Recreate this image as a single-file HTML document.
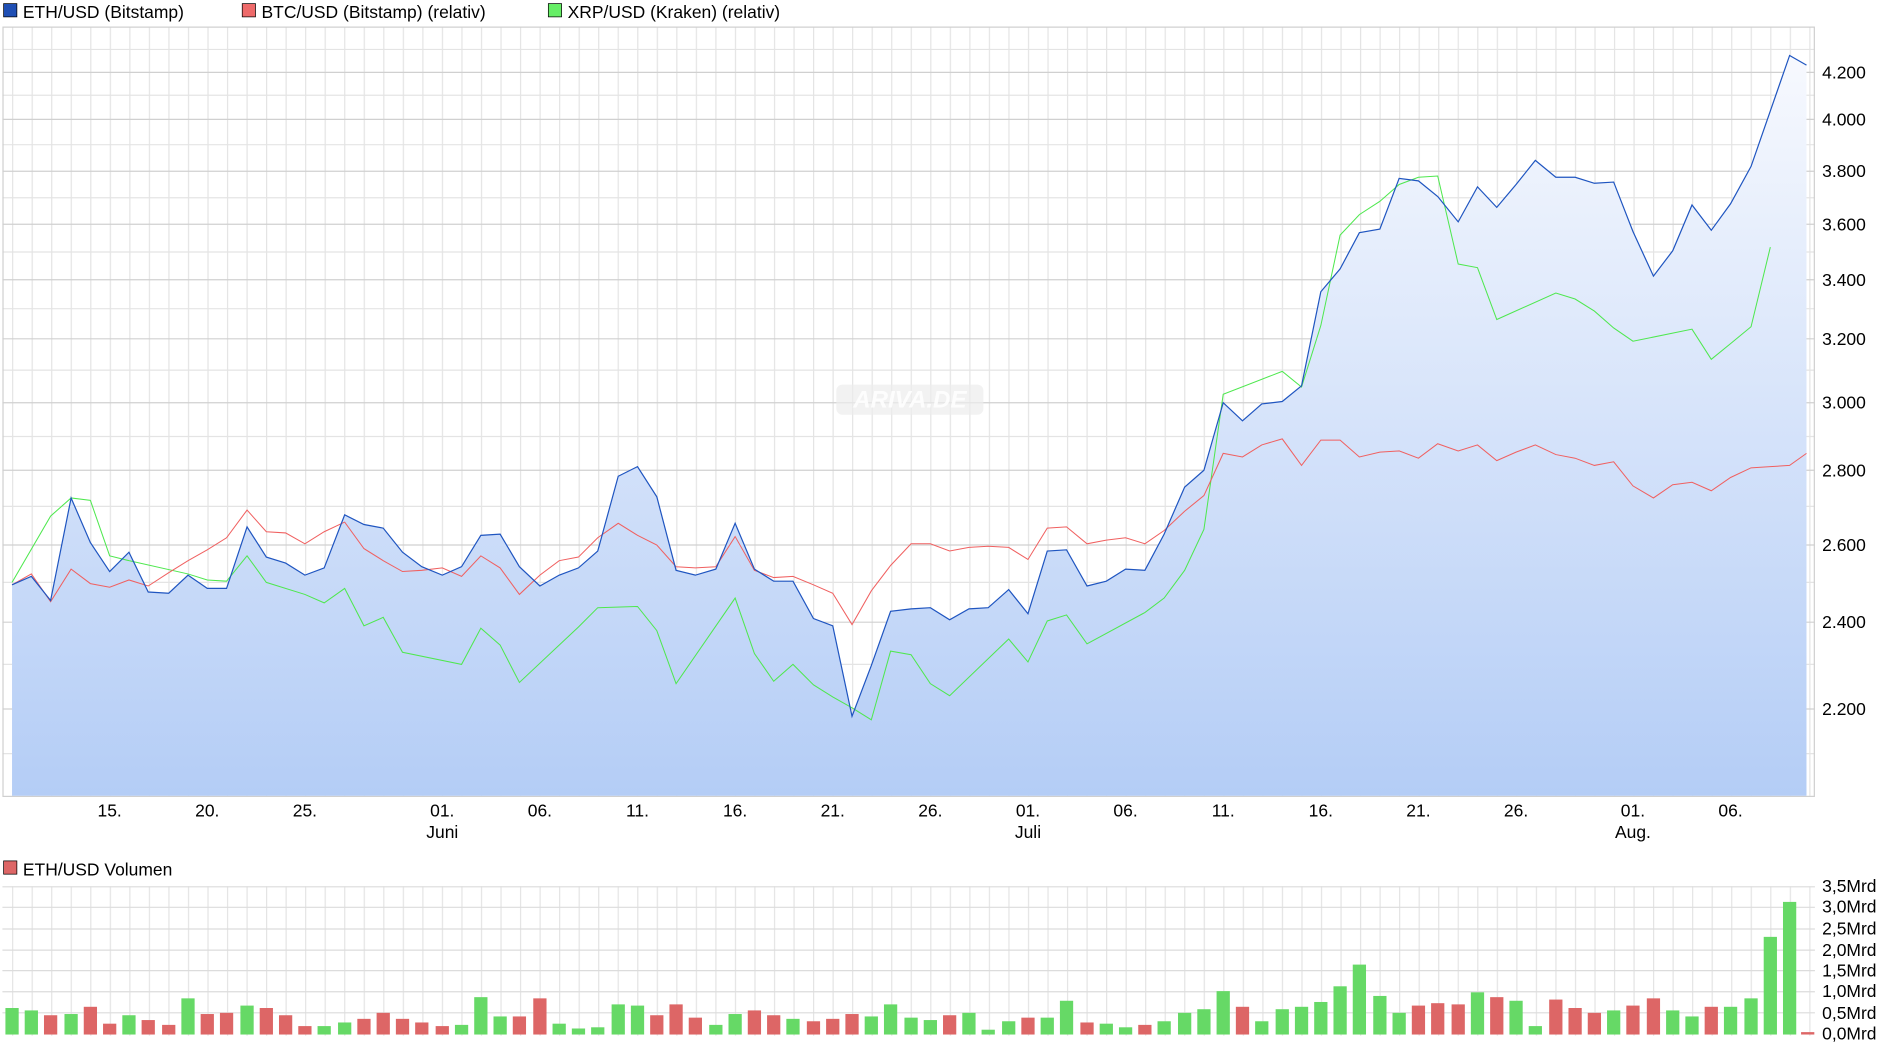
<!DOCTYPE html>
<html><head><meta charset="utf-8"><style>
html,body{margin:0;padding:0;background:#fff;overflow:hidden}
svg{display:block}
text{font-family:"Liberation Sans",Arial,sans-serif;fill:#000}
</style></head><body>
<svg width="1880" height="1049" viewBox="0 0 1560 870" preserveAspectRatio="none" xmlns="http://www.w3.org/2000/svg">
<defs>
<linearGradient id="fg" x1="0" y1="0" x2="0" y2="1"><stop offset="0" stop-color="#f7f9fe"/><stop offset="1" stop-color="#b4cdf6"/></linearGradient>
<pattern id="vg" x="10" y="0" width="16.21" height="10" patternUnits="userSpaceOnUse"><line x1="0.5" y1="0" x2="0.5" y2="10" stroke="#e4e4e4" stroke-width="1"/></pattern>
</defs>
<rect x="3" y="3" width="11" height="11" fill="#1f4fb4" stroke="#000" stroke-width="0.6"/>
<text x="19" y="15" font-size="14.5">ETH/USD (Bitstamp)</text>
<rect x="201" y="3" width="11" height="11" fill="#ee6a6a" stroke="#000" stroke-width="0.6"/>
<text x="217" y="15" font-size="14.5">BTC/USD (Bitstamp) (relativ)</text>
<rect x="455" y="3" width="11" height="11" fill="#66ee66" stroke="#000" stroke-width="0.6"/>
<text x="471" y="15" font-size="14.5">XRP/USD (Kraken) (relativ)</text>

<rect x="2" y="22" width="1504" height="638" fill="url(#vg)"/>
<g stroke="#e4e4e4" stroke-width="1">
<line x1="2" y1="41" x2="1506" y2="41"/><line x1="2" y1="79" x2="1506" y2="79"/><line x1="2" y1="120" x2="1506" y2="120"/><line x1="2" y1="164" x2="1506" y2="164"/><line x1="2" y1="209" x2="1506" y2="209"/><line x1="2" y1="256" x2="1506" y2="256"/><line x1="2" y1="307" x2="1506" y2="307"/><line x1="2" y1="362" x2="1506" y2="362"/><line x1="2" y1="420" x2="1506" y2="420"/><line x1="2" y1="483" x2="1506" y2="483"/><line x1="2" y1="551" x2="1506" y2="551"/><line x1="2" y1="625" x2="1506" y2="625"/>
</g>
<g stroke="#d0d0d0" stroke-width="1">
<line x1="2" y1="60" x2="1506" y2="60"/><line x1="2" y1="99" x2="1506" y2="99"/><line x1="2" y1="142" x2="1506" y2="142"/><line x1="2" y1="186" x2="1506" y2="186"/><line x1="2" y1="232" x2="1506" y2="232"/><line x1="2" y1="281" x2="1506" y2="281"/><line x1="2" y1="334" x2="1506" y2="334"/><line x1="2" y1="390" x2="1506" y2="390"/><line x1="2" y1="452" x2="1506" y2="452"/><line x1="2" y1="516" x2="1506" y2="516"/><line x1="2" y1="588" x2="1506" y2="588"/>
</g>
<rect x="2.5" y="22.5" width="1503" height="638" fill="none" stroke="#cfcfcf"/>

<polygon fill="url(#fg)" points="10,660 10,485 26,478 42,498 59,413 75,450 91,474 107,458 123,491 140,492 156,477 172,488 188,488 205,437 221,462 237,467 253,477 269,471 286,427 302,435 318,438 334,458 350,470 367,477 383,470 399,444 415,443 431,470 448,486 464,477 480,471 496,457 513,395 529,387 545,412 561,473 577,477 594,472 610,434 626,472 642,482 658,482 675,513 691,519 707,594 723,552 739,507 756,505 772,504 788,514 804,505 820,504 837,489 853,509 869,457 885,456 902,486 918,482 934,472 950,473 966,443 983,404 999,390 1015,334 1031,349 1047,335 1064,333 1080,320 1096,242 1112,223 1128,193 1145,190 1161,148 1177,150 1193,163 1210,184 1226,155 1242,172 1258,153 1274,133 1291,147 1307,147 1323,152 1339,151 1355,192 1372,229 1388,208 1404,170 1420,191 1436,169 1453,138 1469,92 1485,46 1499,54 1499,660"/>

<rect x="694" y="319" width="122" height="25" rx="5" fill="#ececec" opacity="0.7"/>
<text x="755" y="338" font-size="20" font-style="italic" font-weight="bold" text-anchor="middle" style="fill:#fff" opacity="0.9">ARIVA.DE</text>

<polyline fill="none" stroke="#4ee84e" stroke-width="0.85" points="10,483 42,428 59,413 75,415 91,461 107,465 156,476 172,481 188,482 205,461 221,483 253,493 269,500 286,488 302,519 318,512 334,541 383,551 399,521 415,535 431,566 480,520 496,504 529,503 545,523 561,567 610,496 626,542 642,565 658,551 675,568 691,578 707,587 723,597 739,540 756,543 772,567 788,577 837,530 853,549 869,515 885,510 902,534 950,508 966,496 983,473 999,439 1015,327 1064,308 1080,321 1096,270 1112,195 1128,178 1145,167 1161,153 1177,147 1193,146 1210,219 1226,222 1242,265 1291,243 1307,248 1323,258 1339,272 1355,283 1404,273 1420,298 1436,285 1453,271 1469,205"/>
<polyline fill="none" stroke="#f06060" stroke-width="0.85" points="10,485 26,476 42,499 59,472 75,484 91,487 107,481 123,486 140,475 156,465 172,456 188,446 205,423 221,441 237,442 253,451 269,441 286,433 302,455 318,465 334,474 350,473 367,471 383,478 399,461 415,471 431,493 448,477 464,465 480,462 496,446 513,434 529,444 545,452 561,470 577,471 594,470 610,445 626,473 642,479 658,478 675,485 691,492 707,518 723,490 739,469 756,451 772,451 788,457 804,454 820,453 837,454 853,464 869,438 885,437 902,451 918,448 934,446 950,451 966,440 983,424 999,411 1015,376 1031,379 1047,369 1064,364 1080,386 1096,365 1112,365 1128,379 1145,375 1161,374 1177,380 1193,368 1210,374 1226,369 1242,382 1258,375 1274,369 1291,377 1307,380 1323,386 1339,383 1355,403 1372,413 1388,402 1404,400 1420,407 1436,396 1453,388 1469,387 1485,386 1499,376"/>
<polyline fill="none" stroke="#1f55c0" stroke-width="1" points="10,485 26,478 42,498 59,413 75,450 91,474 107,458 123,491 140,492 156,477 172,488 188,488 205,437 221,462 237,467 253,477 269,471 286,427 302,435 318,438 334,458 350,470 367,477 383,470 399,444 415,443 431,470 448,486 464,477 480,471 496,457 513,395 529,387 545,412 561,473 577,477 594,472 610,434 626,472 642,482 658,482 675,513 691,519 707,594 723,552 739,507 756,505 772,504 788,514 804,505 820,504 837,489 853,509 869,457 885,456 902,486 918,482 934,472 950,473 966,443 983,404 999,390 1015,334 1031,349 1047,335 1064,333 1080,320 1096,242 1112,223 1128,193 1145,190 1161,148 1177,150 1193,163 1210,184 1226,155 1242,172 1258,153 1274,133 1291,147 1307,147 1323,152 1339,151 1355,192 1372,229 1388,208 1404,170 1420,191 1436,169 1453,138 1469,92 1485,46 1499,54"/>

<g font-size="14.5">
<text x="1512" y="65">4.200</text><text x="1512" y="104">4.000</text><text x="1512" y="147">3.800</text><text x="1512" y="191">3.600</text><text x="1512" y="237">3.400</text><text x="1512" y="286">3.200</text><text x="1512" y="339">3.000</text><text x="1512" y="395">2.800</text><text x="1512" y="457">2.600</text><text x="1512" y="521">2.400</text><text x="1512" y="593">2.200</text>
</g>
<g font-size="14.5" text-anchor="middle">
<text x="91" y="677">15.</text><text x="172" y="677">20.</text><text x="253" y="677">25.</text><text x="367" y="677">01.</text><text x="367" y="695">Juni</text><text x="448" y="677">06.</text><text x="529" y="677">11.</text><text x="610" y="677">16.</text><text x="691" y="677">21.</text><text x="772" y="677">26.</text><text x="853" y="677">01.</text><text x="853" y="695">Juli</text><text x="934" y="677">06.</text><text x="1015" y="677">11.</text><text x="1096" y="677">16.</text><text x="1177" y="677">21.</text><text x="1258" y="677">26.</text><text x="1355" y="677">01.</text><text x="1355" y="695">Aug.</text><text x="1436" y="677">06.</text>
</g>

<rect x="3" y="714" width="11" height="11" fill="#dd6666" stroke="#000" stroke-width="0.6"/>
<text x="19" y="726" font-size="14.5">ETH/USD Volumen</text>
<rect x="2" y="735" width="1504" height="124" fill="url(#vg)"/>
<g stroke="#dcdcdc"><line x1="2" y1="735.5" x2="1506" y2="735.5"/><line x1="2" y1="752.5" x2="1506" y2="752.5"/><line x1="2" y1="770.5" x2="1506" y2="770.5"/><line x1="2" y1="788" x2="1506" y2="788"/><line x1="2" y1="805" x2="1506" y2="805"/><line x1="2" y1="822.5" x2="1506" y2="822.5"/><line x1="2" y1="840" x2="1506" y2="840"/></g>
<g font-size="14.5"><text x="1512" y="740">3,5Mrd</text><text x="1512" y="757">3,0Mrd</text><text x="1512" y="775">2,5Mrd</text><text x="1512" y="793">2,0Mrd</text><text x="1512" y="810">1,5Mrd</text><text x="1512" y="827">1,0Mrd</text><text x="1512" y="845">0,5Mrd</text><text x="1512" y="862">0,0Mrd</text></g>
<g>
<rect x="4.5" y="836" width="11" height="22" fill="#66d966"/>
<rect x="20.5" y="838" width="11" height="20" fill="#66d966"/>
<rect x="36.5" y="842" width="11" height="16" fill="#dd6666"/>
<rect x="53.5" y="841" width="11" height="17" fill="#66d966"/>
<rect x="69.5" y="835" width="11" height="23" fill="#dd6666"/>
<rect x="85.5" y="849" width="11" height="9" fill="#dd6666"/>
<rect x="101.5" y="842" width="11" height="16" fill="#66d966"/>
<rect x="117.5" y="846" width="11" height="12" fill="#dd6666"/>
<rect x="134.5" y="850" width="11" height="8" fill="#dd6666"/>
<rect x="150.5" y="828" width="11" height="30" fill="#66d966"/>
<rect x="166.5" y="841" width="11" height="17" fill="#dd6666"/>
<rect x="182.5" y="840" width="11" height="18" fill="#dd6666"/>
<rect x="199.5" y="834" width="11" height="24" fill="#66d966"/>
<rect x="215.5" y="836" width="11" height="22" fill="#dd6666"/>
<rect x="231.5" y="842" width="11" height="16" fill="#dd6666"/>
<rect x="247.5" y="851" width="11" height="7" fill="#dd6666"/>
<rect x="263.5" y="851" width="11" height="7" fill="#66d966"/>
<rect x="280.5" y="848" width="11" height="10" fill="#66d966"/>
<rect x="296.5" y="845" width="11" height="13" fill="#dd6666"/>
<rect x="312.5" y="840" width="11" height="18" fill="#dd6666"/>
<rect x="328.5" y="845" width="11" height="13" fill="#dd6666"/>
<rect x="344.5" y="848" width="11" height="10" fill="#dd6666"/>
<rect x="361.5" y="851" width="11" height="7" fill="#dd6666"/>
<rect x="377.5" y="850" width="11" height="8" fill="#66d966"/>
<rect x="393.5" y="827" width="11" height="31" fill="#66d966"/>
<rect x="409.5" y="843" width="11" height="15" fill="#66d966"/>
<rect x="425.5" y="843" width="11" height="15" fill="#dd6666"/>
<rect x="442.5" y="828" width="11" height="30" fill="#dd6666"/>
<rect x="458.5" y="849" width="11" height="9" fill="#66d966"/>
<rect x="474.5" y="853" width="11" height="5" fill="#66d966"/>
<rect x="490.5" y="852" width="11" height="6" fill="#66d966"/>
<rect x="507.5" y="833" width="11" height="25" fill="#66d966"/>
<rect x="523.5" y="834" width="11" height="24" fill="#66d966"/>
<rect x="539.5" y="842" width="11" height="16" fill="#dd6666"/>
<rect x="555.5" y="833" width="11" height="25" fill="#dd6666"/>
<rect x="571.5" y="844" width="11" height="14" fill="#dd6666"/>
<rect x="588.5" y="850" width="11" height="8" fill="#66d966"/>
<rect x="604.5" y="841" width="11" height="17" fill="#66d966"/>
<rect x="620.5" y="838" width="11" height="20" fill="#dd6666"/>
<rect x="636.5" y="842" width="11" height="16" fill="#dd6666"/>
<rect x="652.5" y="845" width="11" height="13" fill="#66d966"/>
<rect x="669.5" y="847" width="11" height="11" fill="#dd6666"/>
<rect x="685.5" y="845" width="11" height="13" fill="#dd6666"/>
<rect x="701.5" y="841" width="11" height="17" fill="#dd6666"/>
<rect x="717.5" y="843" width="11" height="15" fill="#66d966"/>
<rect x="733.5" y="833" width="11" height="25" fill="#66d966"/>
<rect x="750.5" y="844" width="11" height="14" fill="#66d966"/>
<rect x="766.5" y="846" width="11" height="12" fill="#66d966"/>
<rect x="782.5" y="842" width="11" height="16" fill="#dd6666"/>
<rect x="798.5" y="840" width="11" height="18" fill="#66d966"/>
<rect x="814.5" y="854" width="11" height="4" fill="#66d966"/>
<rect x="831.5" y="847" width="11" height="11" fill="#66d966"/>
<rect x="847.5" y="844" width="11" height="14" fill="#dd6666"/>
<rect x="863.5" y="844" width="11" height="14" fill="#66d966"/>
<rect x="879.5" y="830" width="11" height="28" fill="#66d966"/>
<rect x="896.5" y="848" width="11" height="10" fill="#dd6666"/>
<rect x="912.5" y="849" width="11" height="9" fill="#66d966"/>
<rect x="928.5" y="852" width="11" height="6" fill="#66d966"/>
<rect x="944.5" y="850" width="11" height="8" fill="#dd6666"/>
<rect x="960.5" y="847" width="11" height="11" fill="#66d966"/>
<rect x="977.5" y="840" width="11" height="18" fill="#66d966"/>
<rect x="993.5" y="837" width="11" height="21" fill="#66d966"/>
<rect x="1009.5" y="822" width="11" height="36" fill="#66d966"/>
<rect x="1025.5" y="835" width="11" height="23" fill="#dd6666"/>
<rect x="1041.5" y="847" width="11" height="11" fill="#66d966"/>
<rect x="1058.5" y="837" width="11" height="21" fill="#66d966"/>
<rect x="1074.5" y="835" width="11" height="23" fill="#66d966"/>
<rect x="1090.5" y="831" width="11" height="27" fill="#66d966"/>
<rect x="1106.5" y="818" width="11" height="40" fill="#66d966"/>
<rect x="1122.5" y="800" width="11" height="58" fill="#66d966"/>
<rect x="1139.5" y="826" width="11" height="32" fill="#66d966"/>
<rect x="1155.5" y="840" width="11" height="18" fill="#66d966"/>
<rect x="1171.5" y="834" width="11" height="24" fill="#dd6666"/>
<rect x="1187.5" y="832" width="11" height="26" fill="#dd6666"/>
<rect x="1204.5" y="833" width="11" height="25" fill="#dd6666"/>
<rect x="1220.5" y="823" width="11" height="35" fill="#66d966"/>
<rect x="1236.5" y="827" width="11" height="31" fill="#dd6666"/>
<rect x="1252.5" y="830" width="11" height="28" fill="#66d966"/>
<rect x="1268.5" y="851" width="11" height="7" fill="#66d966"/>
<rect x="1285.5" y="829" width="11" height="29" fill="#dd6666"/>
<rect x="1301.5" y="836" width="11" height="22" fill="#dd6666"/>
<rect x="1317.5" y="840" width="11" height="18" fill="#dd6666"/>
<rect x="1333.5" y="838" width="11" height="20" fill="#66d966"/>
<rect x="1349.5" y="834" width="11" height="24" fill="#dd6666"/>
<rect x="1366.5" y="828" width="11" height="30" fill="#dd6666"/>
<rect x="1382.5" y="838" width="11" height="20" fill="#66d966"/>
<rect x="1398.5" y="843" width="11" height="15" fill="#66d966"/>
<rect x="1414.5" y="835" width="11" height="23" fill="#dd6666"/>
<rect x="1430.5" y="835" width="11" height="23" fill="#66d966"/>
<rect x="1447.5" y="828" width="11" height="30" fill="#66d966"/>
<rect x="1463.5" y="777" width="11" height="81" fill="#66d966"/>
<rect x="1479.5" y="748" width="11" height="110" fill="#66d966"/>
<rect x="1494.5" y="856" width="11" height="2" fill="#dd6666"/>
</g>
</svg>
</body></html>
